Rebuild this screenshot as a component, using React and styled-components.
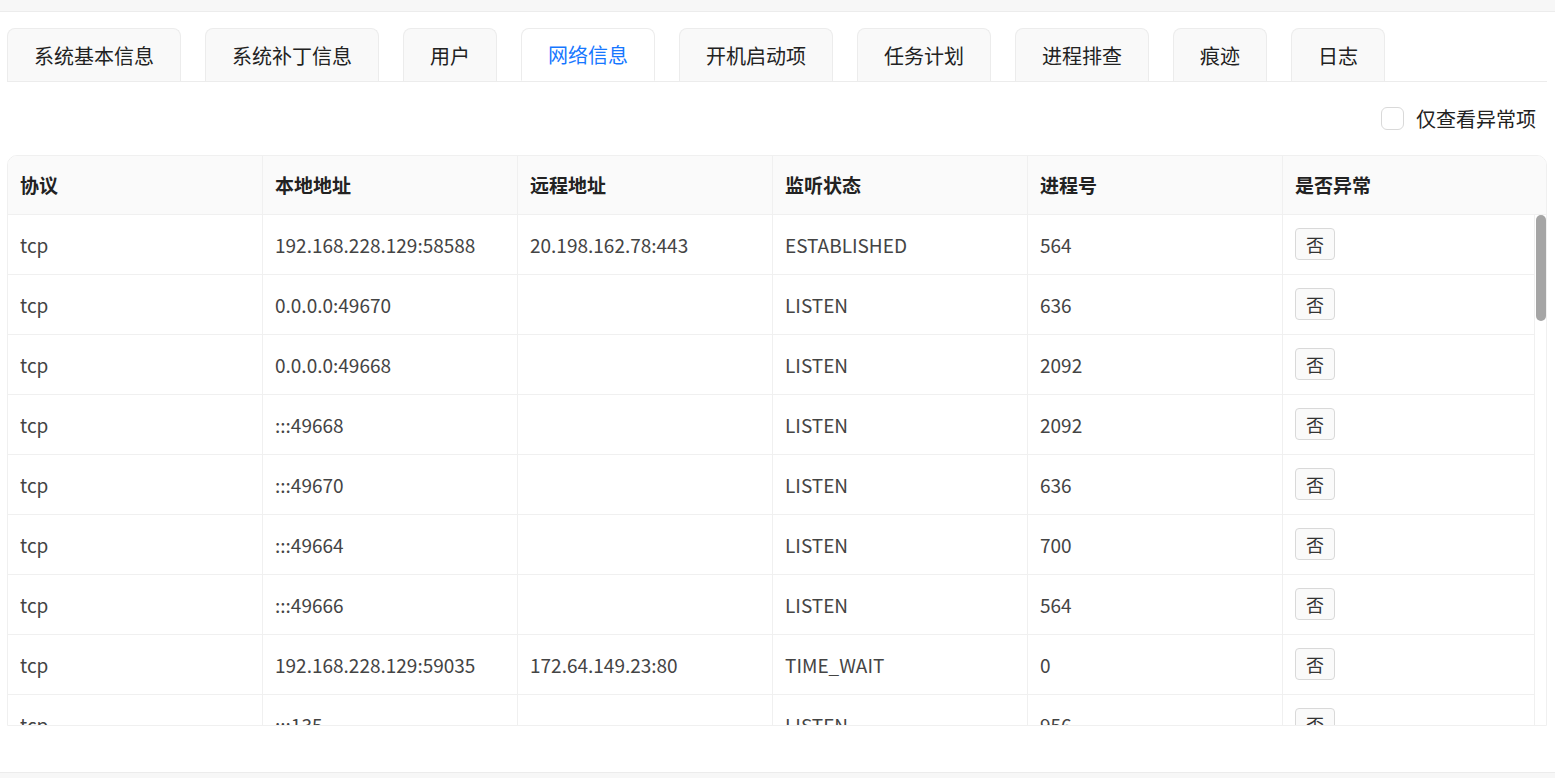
import React from 'react';
import styled, { createGlobalStyle } from 'styled-components';

const Global = createGlobalStyle`
  body { margin: 0; font-family: "Noto Sans CJK SC", "Open Sans", sans-serif; color: #333; background: #fff; }
`;

const Page = styled.div`
  height: 778px;
  display: flex;
  flex-direction: column;
  overflow: hidden;
`;

const TopBar = styled.div`
  height: 11px;
  background: #f7f7f7;
  border-bottom: 1px solid #ececec;
`;

const Main = styled.div`
  flex: 1;
  padding: 16px 8px 0 7px;
  display: flex;
  flex-direction: column;
  min-height: 0;
`;

const TabBar = styled.div`
  display: flex;
  gap: 24px;
  border-bottom: 1px solid #ececec;
  height: 53px;
`;

const Tab = styled.div`
  padding: 0 26px;
  height: 53px;
  box-sizing: border-box;
  display: flex;
  align-items: center;
  font-size: 20px;
  border: 1px solid #ececec;
  border-bottom: ${p => (p.$active ? '1px solid #fff' : 'none')};
  border-radius: 8px 8px 0 0;
  background: ${p => (p.$active ? '#fff' : '#f9f9f9')};
  color: ${p => (p.$active ? '#1677ff' : '#222')};
`;

const FilterRow = styled.div`
  display: flex;
  justify-content: flex-end;
  align-items: center;
  gap: 12px;
  height: 73px;
  font-size: 20px;
  color: #222;
  padding-right: 11px;
`;

const Box = styled.span`
  width: 23px;
  height: 23px;
  border: 1px solid #d9d9d9;
  border-radius: 6px;
  box-sizing: border-box;
`;

const Table = styled.div`
  border: 1px solid #f0f0f0;
  border-radius: 10px 10px 0 0;
  display: flex;
  flex-direction: column;
  height: 573px;
  overflow: hidden;
`;

const Head = styled.div`
  display: grid;
  grid-template-columns: repeat(5, 255px) 1fr;
  background: #fafafa;
  height: 58px;
  flex-shrink: 0;
  border-bottom: 1px solid #f0f0f0;
  font-weight: 700;
`;

const Cell = styled.div`
  padding: 0 12px;
  display: flex;
  align-items: center;
  border-right: 1px solid #f0f0f0;
  font-size: 19px;
  color: ${p => (p.$head ? '#222' : '#444')};
  &:last-child { border-right: none; }
`;

const Body = styled.div`
  flex: 1;
  min-height: 0;
  display: flex;
`;

const Rows = styled.div`
  flex: 1;
  overflow: hidden;
  border-right: 1px solid #f0f0f0;
`;

const Track = styled.div`
  width: 11px;
  position: relative;
  flex-shrink: 0;
`;

const Thumb = styled.div`
  position: absolute;
  top: 0;
  left: 1px;
  width: 10px;
  height: 106px;
  border-radius: 5px;
  background: #a5a5a5;
`;

const Row = styled.div`
  display: grid;
  grid-template-columns: repeat(5, 255px) 1fr;
  height: 60px;
  border-bottom: 1px solid #f0f0f0;
  box-sizing: border-box;
`;

const Tag = styled.span`
  border: 1px solid #d9d9d9;
  background: #fafafa;
  border-radius: 4px;
  padding: 2px 10px;
  font-size: 18px;
  color: #333;
`;

const Footer = styled.div`
  height: 46px;
  flex-shrink: 0;
`;

const BottomBar = styled.div`
  height: 5px;
  border-top: 1px solid #ececec;
  background: #f7f7f7;
`;

const tabs = ['系统基本信息', '系统补丁信息', '用户', '网络信息', '开机启动项', '任务计划', '进程排查', '痕迹', '日志'];
const heads = ['协议', '本地地址', '远程地址', '监听状态', '进程号', '是否异常'];

const rows = [
  ['tcp', '192.168.228.129:58588', '20.198.162.78:443', 'ESTABLISHED', '564'],
  ['tcp', '0.0.0.0:49670', '', 'LISTEN', '636'],
  ['tcp', '0.0.0.0:49668', '', 'LISTEN', '2092'],
  ['tcp', ':::49668', '', 'LISTEN', '2092'],
  ['tcp', ':::49670', '', 'LISTEN', '636'],
  ['tcp', ':::49664', '', 'LISTEN', '700'],
  ['tcp', ':::49666', '', 'LISTEN', '564'],
  ['tcp', '192.168.228.129:59035', '172.64.149.23:80', 'TIME_WAIT', '0'],
  ['tcp', ':::135', '', 'LISTEN', '956'],
];

export default function App() {
  return (
    <Page>
      <Global />
      <TopBar />
      <Main>
        <TabBar>
          {tabs.map(t => <Tab key={t} $active={t === '网络信息'}>{t}</Tab>)}
        </TabBar>
        <FilterRow><Box />仅查看异常项</FilterRow>
        <Table>
          <Head>
            {heads.map(h => <Cell key={h} $head>{h}</Cell>)}
          </Head>
          <Body>
            <Rows>
              {rows.map((r, i) => (
                <Row key={i}>
                  {r.map((c, j) => <Cell key={j}>{c}</Cell>)}
                  <Cell><Tag>否</Tag></Cell>
                </Row>
              ))}
            </Rows>
            <Track><Thumb /></Track>
          </Body>
        </Table>
        <Footer />
      </Main>
      <BottomBar />
    </Page>
  );
}
